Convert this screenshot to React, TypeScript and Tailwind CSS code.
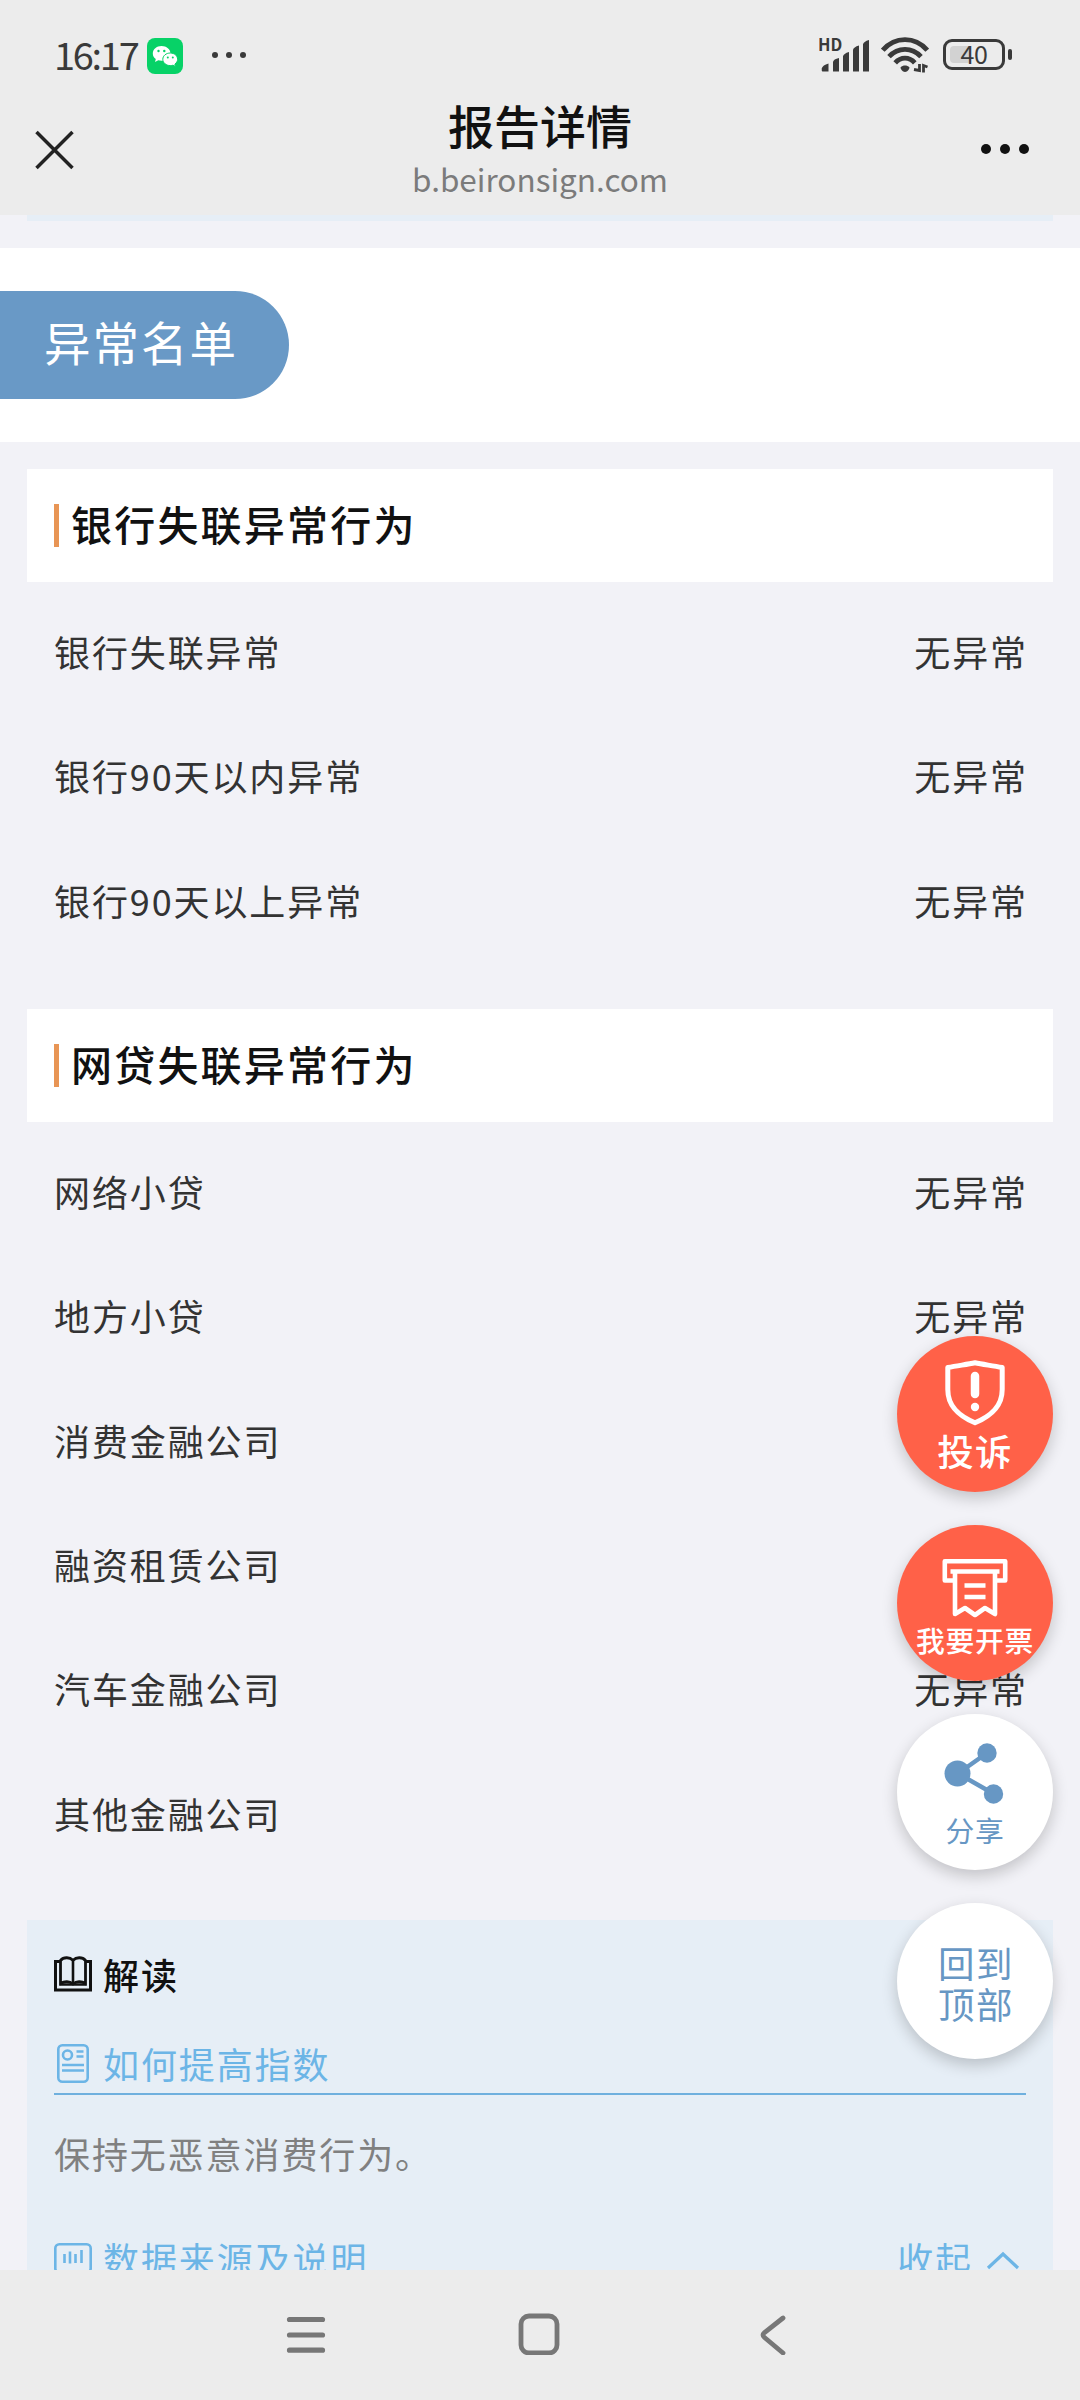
import React from 'react';

const bankRows = [
  { label: '银行失联异常', value: '无异常' },
  { label: '银行90天以内异常', value: '无异常' },
  { label: '银行90天以上异常', value: '无异常' },
];

const loanRows = [
  { label: '网络小贷', value: '无异常' },
  { label: '地方小贷', value: '无异常' },
  { label: '消费金融公司', value: '' },
  { label: '融资租赁公司', value: '' },
  { label: '汽车金融公司', value: '无异常' },
  { label: '其他金融公司', value: '' },
];

const StatusBar = () => (
  <div className="flex h-[74px] items-end justify-between pl-[54px] pr-[68px] text-[#3a3a3a]">
    <div className="flex h-[37px] items-center">
      <span className="w-[93px] whitespace-nowrap pb-[4px] text-[38px] leading-[37px] tracking-[-2.300px]">16:17</span>
      <svg className="h-9 w-9" viewBox="0 0 36 36">
        <rect width="36" height="36" rx="8" fill="#07d267" />
        <path
          d="M14.500 8C9.500 8 5.800 11.300 5.800 15.500c0 2.300 1.200 4.300 3 5.600L8 24l3.300-1.700c1 .3 2 .5 3.200.5 5 0 9-3.200 9-7.300S19.500 8 14.500 8z"
          fill="#fff"
        />
        <path
          d="M23.300 15c-4.200 0-7.500 2.800-7.500 6.300s3.300 6.300 7.500 6.300c1 0 1.900-.1 2.700-.4l2.500 1.300-.6-2.400c1.600-1.200 2.700-2.900 2.700-4.800 0-3.500-3.200-6.300-7.300-6.300z"
          fill="#fff"
          stroke="#07d267"
          strokeWidth="1"
        />
        <g fill="#07d267">
          <circle cx="11.500" cy="13" r="1.200" />
          <circle cx="17.300" cy="13" r="1.200" />
          <circle cx="20.800" cy="19.500" r="1" />
          <circle cx="25.800" cy="19.500" r="1" />
        </g>
      </svg>
      <div className="ml-[29px] flex gap-[8px] pb-[1px]">
        <i className="h-1.5 w-1.5 rounded-full bg-current" />
        <i className="h-1.5 w-1.5 rounded-full bg-current" />
        <i className="h-1.5 w-1.5 rounded-full bg-current" />
      </div>
    </div>
    <div className="flex h-[37px] items-center pb-[2px]">
      <svg className="h-[36px] w-[52px]" viewBox="0 0 52 36" fill="currentColor">
        <text x="-1" y="13.500" fontSize="16.500" fontWeight="700">HD</text>
        <path d="M3.500 34.500q-1-.5-.8-3 1-3.500 6.800-5v8zM14 34.500V25q.5-3 6-4v13.500zM24 34.500V19.500q.5-3 6-4.500v19.500zM34 34.500V13q.5-3 6-4.500v26zM44 34.500V7.500q.5-3 6-4.500v31.500z" />
      </svg>
      <svg className="ml-[10px] h-[36px] w-[48px]" viewBox="0 0 48 36" fill="none" stroke="currentColor" strokeWidth="4.800">
        <path d="M1.800 13.200C14-.8 34-.8 46.200 13.200" />
        <path d="M8 19.700c9-9.700 23-9.700 32 0" />
        <path d="M14.200 25.800c5.500-6.300 14.100-6.300 19.600 0" />
        <path d="M19.500 30.500c2.500-2.600 6.500-2.600 9 0 0 1.500-2 4.500-4.500 4.500s-4.500-3-4.500-4.500z" fill="currentColor" stroke="none" />
        <path d="M33 32.500l5.500 1V27M42.500 35.500v-7l4 1.500" strokeWidth="2.800" />
      </svg>
      <div className="ml-[14px] flex items-center gap-[3px]">
        <div className="relative flex h-[31px] w-[62px] items-center justify-center rounded-[9px] border-3 border-current">
          <i className="absolute left-[4px] top-[4px] h-[17px] w-[20px] rounded-l-[4px] bg-[#d2d2d2]" />
          <span className="relative pb-[2px] text-[25px] leading-none tracking-[-0.500px]">40</span>
        </div>
        <i className="h-[11px] w-[4px] rounded-[2px] bg-current" />
      </div>
    </div>
  </div>
);

const NavBar = () => (
  <div className="flex h-[141px] items-start justify-between pl-[35px] pr-[51px]">
    <svg className="mt-[56px] h-[40px] w-[40px]" viewBox="0 0 40 40" stroke="#222" strokeWidth="3.500">
      <path d="M1.500 2L37.500 38M37.500 2L1.500 38" />
    </svg>
    <div className="flex flex-col items-center pl-[24px]">
      <h1 className="mt-[22px] text-[46px] font-medium leading-[56px] text-[#111]">报告详情</h1>
      <p className="mt-[2px] text-[31.500px] leading-[48px] text-[#7b7b7b]">b.beironsign.com</p>
    </div>
    <div className="mt-[70px] flex gap-[9px]">
      <i className="h-2.5 w-2.5 rounded-full bg-[#111]" />
      <i className="h-2.5 w-2.5 rounded-full bg-[#111]" />
      <i className="h-2.5 w-2.5 rounded-full bg-[#111]" />
    </div>
  </div>
);

const Section = ({ title, rows }: { title: string; rows: { label: string; value: string }[] }) => (
  <section className="mx-[27px]">
    <div className="flex h-[113px] items-center bg-white pl-[27px]">
      <i className="h-[43px] w-[5px] bg-[#e89555]" />
      <h2 className="ml-[12px] pb-[4px] text-[41px] font-medium leading-none tracking-[2.200px] text-[#111]">{title}</h2>
    </div>
    <div className="pb-[1px] pt-[7px]">
      {rows.map((row) => (
        <div
          key={row.label}
          className="flex h-[124.300px] items-center justify-between pl-[27px] pr-[25px] text-[36px] tracking-[1.900px] text-[#333]"
        >
          <span>{row.label}</span>
          <span>{row.value}</span>
        </div>
      ))}
    </div>
  </section>
);

const BookIcon = () => (
  <svg className="h-[36px] w-[38px]" viewBox="0 0 38 36" fill="none" stroke="#111" strokeWidth="3">
    <path d="M6 5.500H1.500v28.500h35V5.500H32" />
    <path d="M6.500 27.500V4.500C9.500 1 15.500.8 19 4.200 22.500.8 28.500 1 31.500 4.500v23c-4-2.500-9-2.500-12.500.5-3.500-3-8.500-3-12.500-.5z" strokeWidth="2.800" />
    <path d="M19 4v23M6 28.500h26" strokeWidth="2.600" />
  </svg>
);

const GuideIcon = () => (
  <svg className="mx-[3px] h-[39px] w-[32px]" viewBox="0 0 32 39" fill="none" stroke="currentColor" strokeWidth="2.600">
    <rect x="1.300" y="1.300" width="29.400" height="36.400" rx="4" />
    <circle cx="10.500" cy="11" r="4.500" />
    <path d="M19.500 7.500h7M19.500 12.500h7M5 21h22M5 26.500h22" />
  </svg>
);

const DataIcon = () => (
  <svg className="mt-[6px] h-[36px] w-[38px]" viewBox="0 0 38 36" fill="none" stroke="currentColor" strokeWidth="2.600">
    <rect x="1.300" y="1.300" width="35.400" height="28" rx="4" />
    <path d="M10.500 11v9M16 8.500v12M21.500 11v9M27.500 7v13" />
  </svg>
);

const Analysis = () => (
  <section className="mx-[27px] mt-[44px] h-[500px] shrink-0 bg-[#e6eef6] px-[27px] text-[36px] leading-[40px] tracking-[1.900px]">
    <div className="flex h-[106px] items-center gap-[11px] pt-[2px] font-medium text-[#111]">
      <BookIcon />
      <span>解读</span>
    </div>
    <div className="flex h-[69px] items-center gap-[11px] border-b-2 border-[#6fb0de] pt-[9px] text-[#6cb5e6]">
      <GuideIcon />
      <span className="pb-[1px]">如何提高指数</span>
    </div>
    <p className="mt-[38px] text-[#808080]">保持无恶意消费行为。</p>
    <div className="mt-[64px] flex items-center text-[#6cb5e6]">
      <DataIcon />
      <span className="ml-[11px] flex-1">数据来源及说明</span>
      <span>收起</span>
      <svg className="ml-[13px] mr-[6px] mt-[5px] h-[20px] w-[34px]" viewBox="0 0 34 20" fill="none" stroke="currentColor" strokeWidth="3.200">
        <path d="M2 18L17 4l15 14" />
      </svg>
    </div>
  </section>
);

const FloatingButtons = () => (
  <div className="absolute right-[27px] top-[1121px] flex flex-col gap-[33px] text-[28.800px] leading-[34px] tracking-[0.700px]">
    <button className="flex h-[156px] w-[156px] flex-col items-center rounded-full bg-[#ff6148] text-white shadow-[0_6px_16px_rgba(0,0,0,0.2)]">
      <svg className="mt-[24px] h-[66px] w-[60px]" viewBox="0 0 60 66" fill="none" stroke="currentColor" strokeWidth="5" strokeLinejoin="round" strokeLinecap="round">
        <path d="M2.800 7.500C13 5.500 22 4.500 30 2.800c8 1.700 17 2.700 27.200 4.700v22c0 17-11 26.500-27.200 33.300C13.800 56 2.800 46.500 2.800 29.500z" />
        <path d="M30 16v18" strokeWidth="8.500" />
        <circle cx="30" cy="47" r="4.200" fill="currentColor" stroke="none" />
      </svg>
      <span className="mt-[5px] text-[36.500px] font-medium leading-[40px] tracking-[1.200px]">投诉</span>
    </button>
    <button className="flex h-[156px] w-[156px] flex-col items-center rounded-full bg-[#ff6148] text-white shadow-[0_6px_16px_rgba(0,0,0,0.2)]">
      <svg className="mt-[33px] h-[60px] w-[66px]" viewBox="0 0 66 60" fill="none" stroke="currentColor" strokeWidth="4.600" strokeLinejoin="round">
        <path d="M13 22.500H2.800V3.200h60.400v19.300H53M8.500 13.500h49" />
        <path d="M13 13.500V56l10-6 10 7 10-7 10 6V13.500M22.500 27.500h21M22.500 39h21" />
      </svg>
      <span className="mt-[5px] whitespace-nowrap font-medium">我要开票</span>
    </button>
    <button className="flex h-[156px] w-[156px] flex-col items-center rounded-full bg-white text-[#6797c4] shadow-[0_6px_16px_rgba(0,0,0,0.2)]">
      <svg className="mr-[2px] mt-[28px] h-[62px] w-[60px]" viewBox="0 0 60 62" fill="currentColor" stroke="currentColor">
        <path d="M43 11L14 31.500 50 52" fill="none" strokeWidth="4.500" />
        <g stroke="none">
          <circle cx="43" cy="11" r="9.700" />
          <circle cx="13.500" cy="31.500" r="13" />
          <circle cx="49.500" cy="52" r="9.700" />
        </g>
      </svg>
      <span className="mt-[9px]">分享</span>
    </button>
    <button className="flex h-[156px] w-[156px] flex-col items-center justify-center rounded-full bg-white pl-[2px] pt-[4px] text-[36.500px] leading-[41px] tracking-[1.500px] text-[#6797c4] shadow-[0_6px_16px_rgba(0,0,0,0.2)]">
      <span className="w-[78px]">回到顶部</span>
    </button>
  </div>
);

const SystemNav = () => (
  <div className="flex h-[130px] shrink-0 items-start bg-[#ececec] pl-[286px] pt-[43px]">
    <svg className="h-[42px] w-[40px]" viewBox="0 0 40 42" stroke="#777" strokeWidth="5.200" strokeLinecap="round">
      <path d="M3.500 6.500h33M3.500 22h33M3.500 37.200h33" />
    </svg>
    <svg className="ml-[192px] h-[42px] w-[42px]" viewBox="0 0 42 42" fill="none" stroke="#777" strokeWidth="4.800">
      <rect x="3" y="3" width="36" height="37" rx="8" />
    </svg>
    <svg className="ml-[198px] h-[42px] w-[30px]" viewBox="0 0 30 42" fill="none" stroke="#777" strokeWidth="4.800" strokeLinecap="round">
      <path d="M25 5L6.500 19.500q-3 2.500 0 5L25 40" />
    </svg>
  </div>
);

const App = () => {
  return (
    <div className="flex h-[2400px] w-[1080px] flex-col overflow-hidden bg-[#f2f2f7] font-['Noto_Sans_CJK_SC',sans-serif]">
      <header className="shrink-0 bg-[#ececec]">
        <StatusBar />
        <NavBar />
      </header>
      <main className="relative flex min-h-0 flex-1 flex-col overflow-hidden">
        <div className="mx-[27px] h-[6px] shrink-0 bg-[#e6eef6]" />
        <div className="mt-[27px] flex h-[194px] shrink-0 items-center bg-white">
          <div className="flex h-[108px] w-[289px] items-center rounded-r-full bg-[#6999c6] pb-[8px] pl-[44px] text-[46.500px] tracking-[2px] text-white">
            异常名单
          </div>
        </div>
        <div className="mt-[27px] shrink-0">
          <Section title="银行失联异常行为" rows={bankRows} />
        </div>
        <div className="mt-[46px] shrink-0">
          <Section title="网贷失联异常行为" rows={loanRows} />
        </div>
        <Analysis />
        <FloatingButtons />
      </main>
      <SystemNav />
    </div>
  );
};

export default App;
